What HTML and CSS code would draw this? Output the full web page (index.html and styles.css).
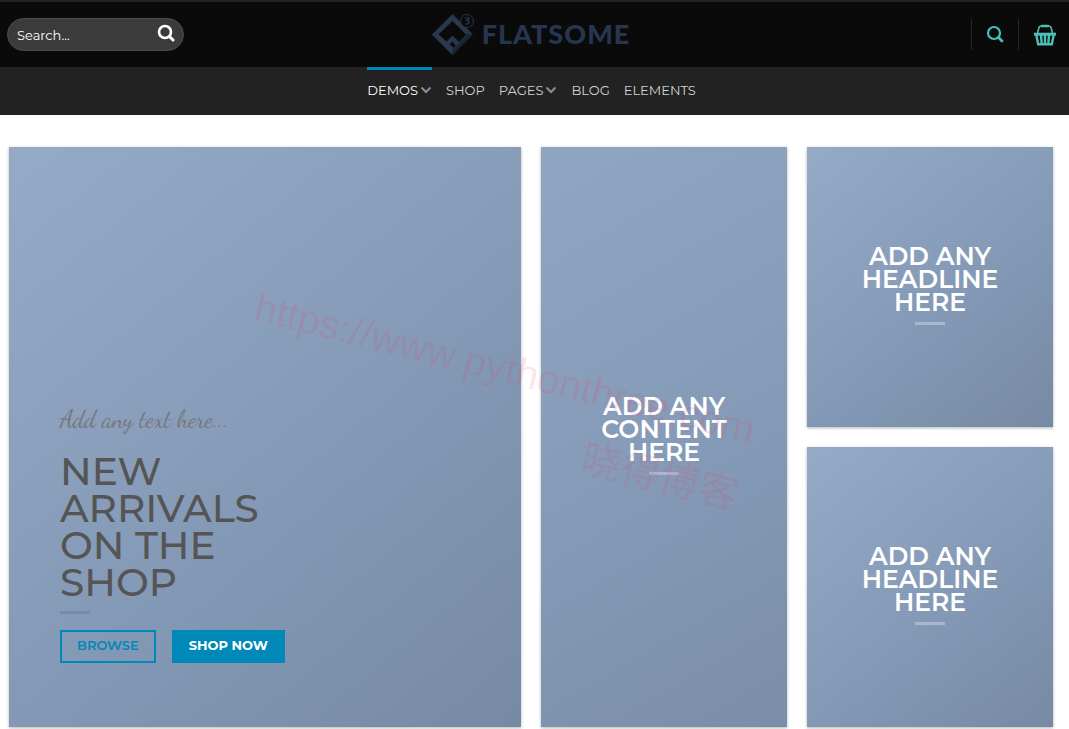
FILE: index.html
```html
<!DOCTYPE html>
<html lang="en">
<head>
<meta charset="utf-8">
<meta name="viewport" content="width=device-width, initial-scale=1">
<title>Flatsome</title>
<link rel="stylesheet" href="styles.css">
</head>
<body>
<header>
  <div class="masthead">
    <form class="search" role="search">
      <input class="search-input" type="search" placeholder="Search..." aria-label="Search">
      <button class="search-button" type="button" aria-label="Submit search">
        <svg width="18" height="18" viewBox="0 0 18 18" fill="none" stroke="currentColor"><circle cx="8" cy="8" r="6" stroke-width="2.6"/><path d="M12.5 12.5L16 16" stroke-width="3" stroke-linecap="round"/></svg>
      </button>
    </form>
    <a class="logo" href="#" aria-label="Flatsome">
      <svg class="logo-mark" width="44" height="44" viewBox="0 0 44 44">
        <path d="M20.500 1L0 21.500L20.500 42L25 37.500L6.500 21.500L20.500 8L34 21.500L41 21.500Z" fill="#28384f"/>
        <path d="M34 21.500L41 21.500L20.500 42L20.500 35Z" fill="#1b2636"/>
        <path d="M6.500 21.500L20.500 35L17 38.500L0 21.500Z" fill="#28384f"/>
        <path d="M14 29L20.500 22.500L27.500 29.500L24 33L20.500 28.500L17 32Z" fill="#28384f"/>
        <circle cx="35" cy="8" r="6.500" fill="#0a0a0a" stroke="#26354b"/>
        <path d="M33 5h4l-2 2.500q2.500 0 2.200 2t-4.200 1.500" fill="none" stroke="#2c3d57" stroke-width="1.200"/>
      </svg>
      <span class="logo-name">FLATSOME</span>
    </a>
    <div class="tools">
      <a class="tool" href="#" aria-label="Search">
        <svg width="18" height="18" viewBox="0 0 18 18" fill="none" stroke="currentColor"><circle cx="8" cy="8" r="6" stroke-width="2.200"/><path d="M12.500 12.500L16 16" stroke-width="2.800" stroke-linecap="round"/></svg>
      </a>
      <a class="tool tool-cart" href="#" aria-label="Cart">
        <svg width="24" height="22" viewBox="0 0 24 22" fill="none" stroke="currentColor"><path d="M4.500 9L6 3.500Q6.300 2.300 7.500 2.300H16.500Q17.700 2.300 18 3.500L19.500 9" stroke-width="1.600"/><path d="M9 2h6" stroke-width="2.600" stroke-linecap="round"/><path d="M1 10.200H23" stroke-width="3"/><path d="M3.300 11L5.200 20.200H18.800L20.700 11M8 11L8.700 20M12 11V20M16 11L15.300 20" stroke-width="2.400"/></svg>
      </a>
    </div>
  </div>
  <nav class="nav" aria-label="Main">
    <a class="nav-link active" href="#">DEMOS<svg width="12" height="8" viewBox="0 0 12 8"><path d="M1.500 1.500L6 6L10.500 1.500"/></svg></a>
    <a class="nav-link" href="#">SHOP</a>
    <a class="nav-link" href="#">PAGES<svg width="12" height="8" viewBox="0 0 12 8"><path d="M1.500 1.500L6 6L10.500 1.500"/></svg></a>
    <a class="nav-link" href="#">BLOG</a>
    <a class="nav-link" href="#">ELEMENTS</a>
  </nav>
</header>
<main class="banners">
  <section class="banner banner-large">
    <p class="script">Add any text here...</p>
    <h1 class="hero-title">NEW<br>ARRIVALS<br>ON THE<br>SHOP</h1>
    <div class="rule rule-dark"></div>
    <div class="actions">
      <button class="btn btn-outline" type="button">BROWSE</button>
      <button class="btn btn-solid" type="button">SHOP NOW</button>
    </div>
  </section>
  <section class="banner banner-tall">
    <h2 class="title">ADD ANY<br>CONTENT<br>HERE</h2>
    <div class="rule"></div>
  </section>
  <section class="banner">
    <h2 class="title">ADD ANY<br>HEADLINE<br>HERE</h2>
    <div class="rule"></div>
  </section>
  <section class="banner">
    <h2 class="title">ADD ANY<br>HEADLINE<br>HERE</h2>
    <div class="rule"></div>
  </section>
  <div class="watermark">https://www.pythonthree.com<br>晓得博客</div>
</main>
</body>
</html>
```
FILE: styles.css
```css
* { box-sizing: border-box; }

body {
  margin: 0;
  background: #fff;
  font-family: Montserrat, Inter, "Liberation Sans", sans-serif;
}

a { color: inherit; text-decoration: none; }

.masthead {
  display: grid;
  grid-template-columns: 1fr auto 1fr;
  align-items: center;
  height: 67px;
  padding: 0 12px 0 7px;
  border-top: 2px solid #1f2326;
  background: #0a0a0a;
}

.search {
  display: flex;
  align-items: center;
  width: 177px;
  height: 33px;
  padding: 0 8px 0 9px;
  border: 1px solid #4c4c4c;
  border-radius: 17px;
  background: #3b3b3b;
}

.search-input {
  flex: 1;
  min-width: 0;
  padding: 0;
  border: 0;
  outline: 0;
  background: none;
  color: #fff;
  font: 13px/20px Montserrat, Inter, sans-serif;
}

.search-input::placeholder { color: #fff; opacity: 1; }

.search-button {
  display: flex;
  padding: 0 0 3px;
  border: 0;
  background: none;
  color: #fff;
}

.logo { display: flex; align-items: center; gap: 6px; }

.logo-name {
  padding: 0 2px 2px 0;
  color: #26364e;
  font: 900 27px/32px Lato, sans-serif;
  letter-spacing: 1px;
}

.tools { display: flex; justify-content: flex-end; }

.tool {
  display: flex;
  align-items: center;
  height: 31px;
  padding: 0 14px 2px;
  border-left: 1px solid #262626;
  color: #4ac0b8;
}

.tool-cart { padding: 0 0 0 14px; }

.nav {
  display: flex;
  justify-content: center;
  gap: 14px;
  height: 48px;
  padding-right: 6px;
  background: #222;
}

.nav-link {
  display: flex;
  align-items: center;
  gap: 2px;
  padding-bottom: 5px;
  border-top: 3px solid transparent;
  color: #d2d2d2;
  font-size: 13px;
}

.nav-link svg { fill: none; stroke: #8f8f8f; stroke-width: 2; }

.active { border-color: #0088b9; color: #fff; }

.banners {
  position: relative;
  display: grid;
  grid-template-columns: repeat(4, 1fr);
  grid-auto-rows: minmax(280px, auto);
  gap: 20px;
  padding: 32px 16px 2px 9px;
  overflow: hidden;
}

.banner {
  display: flex;
  flex-direction: column;
  align-items: center;
  justify-content: center;
  padding-bottom: 5px;
  background: linear-gradient(140deg, #95aac6 0%, #869bb7 50%, #768aa6 100%);
  box-shadow: 0 1px 3px rgba(0, 0, 0, 0.3);
}

.banner-large {
  grid-column: span 2;
  grid-row: span 2;
  align-items: flex-start;
  justify-content: flex-end;
  padding: 0 51px 64px;
}

.banner-tall {
  grid-row: span 2;
  background: linear-gradient(150deg, #90a5c1 0%, #869bb7 50%, #7a8eaa 100%);
}

.script {
  margin: 0 0 17px;
  color: #76777b;
  font: 24px/32px "Dancing Script", "Liberation Serif", cursive;
}

.hero-title {
  margin: 0;
  color: #555;
  font-size: 39px;
  font-weight: 500;
  line-height: 37px;
}

.title {
  margin: 0;
  color: #fff;
  font-size: 25px;
  font-weight: 600;
  line-height: 23px;
  text-align: center;
}

.rule {
  width: 30px;
  height: 3px;
  margin-top: 8px;
  background: #a9b8ce;
}

.rule-dark { margin: 10px 0 16px; background: #7889ab; }

.actions { display: flex; gap: 16px; }

.btn {
  height: 33px;
  padding: 0 15px 3px;
  border: 2px solid #0088b9;
  font: 600 13px/20px Montserrat, Inter, sans-serif;
}

.btn-outline { background: none; color: #0088b9; }
.btn-solid { background: #0088b9; color: #fff; font-weight: 700; }

.watermark {
  position: absolute;
  top: 218px;
  left: 240px;
  color: rgba(240, 50, 95, 0.14);
  font: 40px/68px "Liberation Sans", "Noto Sans CJK SC", sans-serif;
  text-align: right;
  transform: rotate(14deg);
  pointer-events: none;
}
```
